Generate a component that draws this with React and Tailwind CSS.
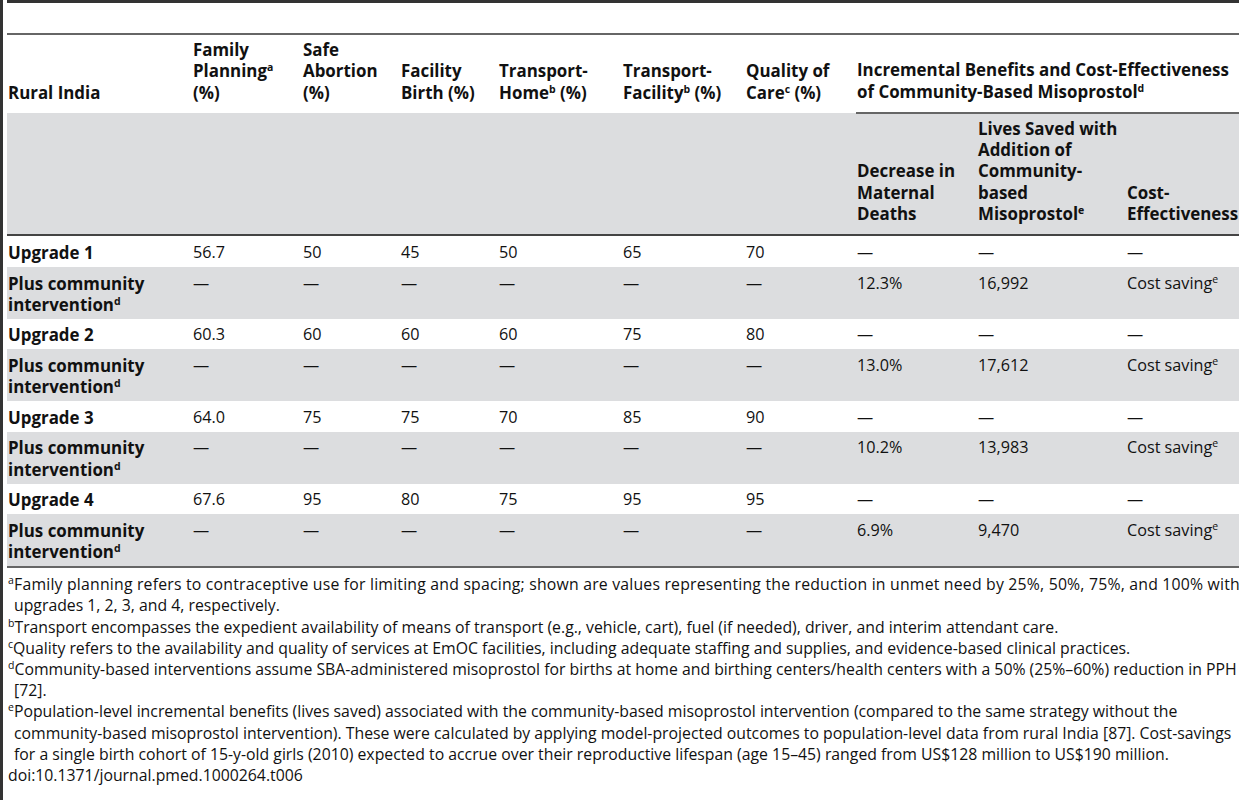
import React from "react"

const D = "—"

const rows = [
  { label: "Upgrade 1", vals: ["56.7", "50", "45", "50", "65", "70", D, D, D] },
  { label: "Plus", vals: [D, D, D, D, D, D, "12.3%", "16,992", "cs"] },
  { label: "Upgrade 2", vals: ["60.3", "60", "60", "60", "75", "80", D, D, D] },
  { label: "Plus", vals: [D, D, D, D, D, D, "13.0%", "17,612", "cs"] },
  { label: "Upgrade 3", vals: ["64.0", "75", "75", "70", "85", "90", D, D, D] },
  { label: "Plus", vals: [D, D, D, D, D, D, "10.2%", "13,983", "cs"] },
  { label: "Upgrade 4", vals: ["67.6", "95", "80", "75", "95", "95", D, D, D] },
  { label: "Plus", vals: [D, D, D, D, D, D, "6.9%", "9,470", "cs"] },
]

const widths = [185, 110, 98, 98, 124, 123, 111, 121, 149, 160]

function Sup({ children }) {
  return <sup className="text-[10.5px] relative -top-[6px] leading-none">{children}</sup>
}

function Cell({ children, className = "" }) {
  return <td className={"pl-[1px] pr-1 align-top pt-[5.6px] pb-[3.7px] " + className}>{children}</td>
}

const th = "text-left align-bottom pl-[1px] pt-[4px] pb-[10px]"

export default function App() {
  return (
    <div
      className="w-[1239px] h-[800px] overflow-hidden bg-white flex text-[#111] text-[16.2px] leading-[21.3px]"
      style={{ fontFamily: "'Open Sans', 'Liberation Sans', sans-serif" }}
    >
      {/* left rule */}
      <div className="w-[3px] shrink-0 bg-[#333]" />
      <div className="w-[4px] shrink-0" />

      <div className="w-[1320px] shrink-0">
        <div className="h-[3px] bg-[#333]" />
        <div className="h-[30px]" />

        <table className="table-fixed border-collapse w-[1279px]">
          <colgroup>
            {widths.map((w, i) => (
              <col key={i} style={{ width: w }} />
            ))}
          </colgroup>
          <thead className="font-bold text-[16.9px]">
            <tr className="border-t-2 border-[#666]">
              <th className={th}>Rural India</th>
              <th className={th}>
                Family<br />Planning<Sup>a</Sup><br />(%)
              </th>
              <th className={th}>
                Safe<br />Abortion<br />(%)
              </th>
              <th className={th}>
                Facility<br />Birth (%)
              </th>
              <th className={th}>
                Transport-<br />Home<Sup>b</Sup> (%)
              </th>
              <th className={th}>
                Transport-<br />Facility<Sup>b</Sup> (%)
              </th>
              <th className={th}>
                Quality of<br />Care<Sup>c</Sup> (%)
              </th>
              <th colSpan={3} className={th + " border-b-2 border-[#666] whitespace-nowrap"}>
                Incremental Benefits and Cost-Effectiveness<br />of Community-Based Misoprostol<Sup>d</Sup>
              </th>
            </tr>
            <tr className="bg-[#dcdddf] border-b-2 border-[#444]">
              <th colSpan={7} />
              <th className={th}>
                Decrease in<br />Maternal<br />Deaths
              </th>
              <th className={th}>
                Lives Saved with<br />Addition of<br />Community-<br />based<br />Misoprostol<Sup>e</Sup>
              </th>
              <th className={th}>
                Cost-<br />Effectiveness
              </th>
            </tr>
          </thead>
          <tbody className="border-b-2 border-[#666]">
            {rows.map((r, i) => (
              <tr key={i} className={i % 2 === 1 ? "bg-[#dcdddf]" : ""}>
                <Cell className="font-bold text-[16.9px]">
                  {r.label === "Plus" ? (
                    <>
                      Plus community<br />intervention<Sup>d</Sup>
                    </>
                  ) : (
                    r.label
                  )}
                </Cell>
                {r.vals.map((v, j) => (
                  <Cell key={j}>
                    {v === "cs" ? (
                      <span className="whitespace-nowrap">
                        Cost saving<Sup>e</Sup>
                      </span>
                    ) : (
                      v
                    )}
                  </Cell>
                ))}
              </tr>
            ))}
          </tbody>
        </table>

        {/* footnotes */}
        <div className="pt-[6px] pl-[1px] whitespace-nowrap text-[15.8px] leading-[21.2px]">
          <div className="pl-[6px] [text-indent:-6px]">
            <span className="tracking-[0.2px]">
              <Sup>a</Sup>Family planning refers to contraceptive use for limiting and spacing; shown are values representing the reduction in unmet need by 25%, 50%, 75%, and 100% with
            </span>
            <br />
            upgrades 1, 2, 3, and 4, respectively.
          </div>
          <div className="pl-[6px] [text-indent:-6px]">
            <Sup>b</Sup>Transport encompasses the expedient availability of means of transport (e.g., vehicle, cart), fuel (if needed), driver, and interim attendant care.
          </div>
          <div className="pl-[6px] [text-indent:-6px]">
            <Sup>c</Sup>Quality refers to the availability and quality of services at EmOC facilities, including adequate staffing and supplies, and evidence-based clinical practices.
          </div>
          <div className="pl-[6px] [text-indent:-6px]">
            <Sup>d</Sup>Community-based interventions assume SBA-administered misoprostol for births at home and birthing centers/health centers with a 50% (25%–60%) reduction in PPH
            <br />
            [72].
          </div>
          <div className="pl-[6px] [text-indent:-6px]">
            <Sup>e</Sup>Population-level incremental benefits (lives saved) associated with the community-based misoprostol intervention (compared to the same strategy without the
            <br />
            community-based misoprostol intervention). These were calculated by applying model-projected outcomes to population-level data from rural India [87]. Cost-savings
            <br />
            for a single birth cohort of 15-y-old girls (2010) expected to accrue over their reproductive lifespan (age 15–45) ranged from US$128 million to US$190 million.
          </div>
          <div>doi:10.1371/journal.pmed.1000264.t006</div>
        </div>
      </div>
    </div>
  )
}
